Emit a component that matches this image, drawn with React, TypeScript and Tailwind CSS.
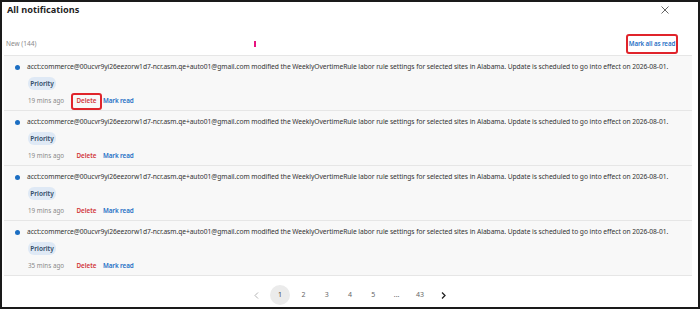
import React from "react";

const message =
  "acct:commerce@00ucvr9yi26eezorw1d7-ncr.asm.qe+auto01@gmail.com modified the WeeklyOvertimeRule labor rule settings for selected sites in Alabama. Update is scheduled to go into effect on 2026-08-01.";

const items = [
  { time: "19 mins ago", marked: true },
  { time: "19 mins ago", marked: false },
  { time: "19 mins ago", marked: false },
  { time: "35 mins ago", marked: false },
];

const NotificationRow = ({ time, marked }: { time: string; marked: boolean }) => {
  return (
    <div className="flex h-[55px] flex-col border-b border-[#e6e6e6] bg-[#f8f8f8] pl-[11px] pt-[6px]">
      <div className="flex h-[10px] items-center">
        <span className="h-[5px] w-[5px] shrink-0 rounded-full bg-[#1b6ec2]" />
        <p className="ml-[7px] whitespace-nowrap text-[6.7px] tracking-[-0.06px] text-[#333]">{message}</p>
      </div>
      <span className="ml-[13px] mt-[5px] flex h-[13px] w-[28px] items-center justify-center rounded-[6px] bg-[#dfe9f5] text-[6.5px] font-semibold text-[#2f4a66]">
        Priority
      </span>
      <div className="mt-[5px] flex h-[12px] items-center text-[6.3px]">
        <span className="ml-[13px] w-[43px] text-[#8a8a8a]">{time}</span>
        <span
          className={
            marked
              ? "-my-[3px] flex h-[17px] w-[31px] items-center justify-center rounded-[3px] border-2 border-[#e0242b] font-semibold text-[#d13438]"
              : "flex w-[31px] items-center justify-center font-semibold text-[#d13438]"
          }
        >
          Delete
        </span>
        <span className="ml-[1px] font-semibold tracking-[-0.1px] text-[#1f6fc5]">Mark read</span>
      </div>
    </div>
  );
};

const App = () => {
  const pages = ["1", "2", "3", "4", "5", "...", "43"];
  return (
    <div className="flex h-[309px] w-[700px] flex-col overflow-hidden border-2 border-[#1a1a1a] bg-white font-['Noto_Sans','Open_Sans',sans-serif]">
      <div className="flex h-[16px] items-center justify-between pl-[5px] pr-[29px]">
        <h1 className="text-[9.2px] font-bold text-[#1f1f1f]">All notifications</h1>
        <svg width="8" height="8" viewBox="0 0 8 8">
          <path d="M0.5 0.5 L7.5 7.5 M7.5 0.5 L0.5 7.5" stroke="#555" strokeWidth="0.9" />
        </svg>
      </div>
      <div className="mt-[15px] flex h-[22px] items-center pl-[4px] pr-[20px]">
        <span className="w-[248px] text-[6.5px] text-[#8a8a8a]">New (144)</span>
        <span className="h-[6px] w-[2px] bg-[#e8137f]" />
        <span className="flex-1" />
        <span className="flex h-[20px] w-[52px] items-center justify-center whitespace-nowrap rounded-[3px] border-2 border-[#e0242b] text-[6.2px] font-semibold tracking-[-0.1px] text-[#1f6fc5]">
          Mark all as read
        </span>
      </div>
      <div className="ml-[2px] mr-[6px] border-t border-[#e6e6e6]">
        {items.map((item, i) => (
          <NotificationRow key={i} time={item.time} marked={item.marked} />
        ))}
      </div>
      <div className="mt-[9px] flex items-center justify-center gap-[3.3px]">
        <span className="flex h-[20px] w-[20px] items-center justify-center">
          <svg width="5" height="7" viewBox="0 0 5 7">
            <path d="M4 0.5 L1 3.5 L4 6.5" stroke="#aaa" strokeWidth="0.9" fill="none" />
          </svg>
        </span>
        {pages.map((p, i) => (
          <span
            key={p}
            className={
              i === 0
                ? "flex h-[20px] w-[20px] items-center justify-center rounded-full bg-[#ebebeb] text-[7px] text-[#444]"
                : "flex h-[20px] w-[20px] items-center justify-center text-[7px] text-[#666]"
            }
          >
            {p}
          </span>
        ))}
        <span className="flex h-[20px] w-[20px] items-center justify-center">
          <svg width="5" height="7" viewBox="0 0 5 7">
            <path d="M1 0.5 L4 3.5 L1 6.5" stroke="#222" strokeWidth="1.3" fill="none" />
          </svg>
        </span>
      </div>
    </div>
  );
};

export default App;
